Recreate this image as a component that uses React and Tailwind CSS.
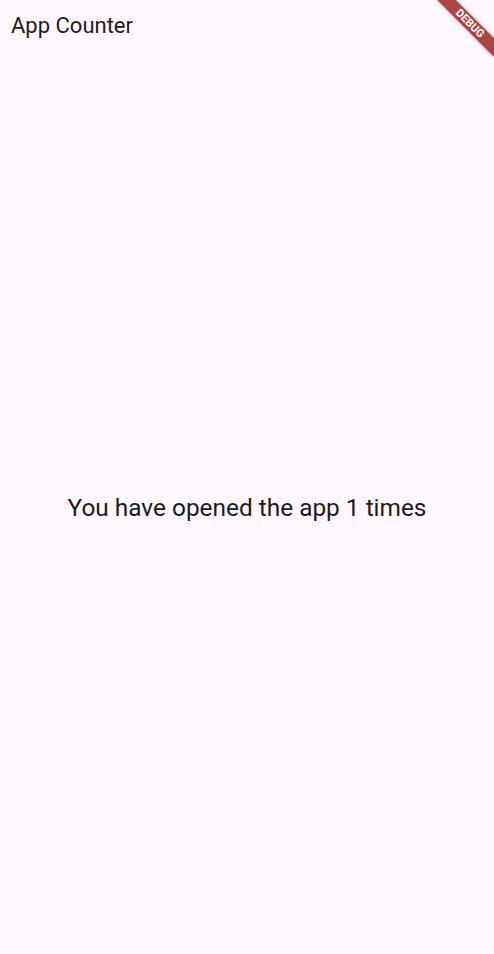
import React from 'react';

const DebugBanner = () => (
  <div className="absolute left-[430px] top-[17px] w-[80px] h-[13px] rotate-45 bg-[#a94646] shadow-[0_0_4px_rgba(0,0,0,0.35)] flex items-center justify-center">
    <span className="text-[11px] leading-none font-bold text-white">DEBUG</span>
  </div>
);

const App = () => {
  const count = 1;

  return (
    <div className="relative w-[494px] h-[954px] overflow-hidden bg-[#fef7ff] text-[#1d1b20] font-['Roboto','Liberation_Sans',sans-serif] flex flex-col">
      <header className="h-[50px] flex items-center px-[11px] pt-[2px] shrink-0">
        <h1 className="text-[22px] leading-[28px] font-normal">App Counter</h1>
      </header>
      <main className="flex-1 flex items-center justify-center pt-[12px]">
        <p className="text-[24.4px] leading-[30px]">You have opened the app {count} times</p>
      </main>
      <DebugBanner />
    </div>
  );
};

export default App;
